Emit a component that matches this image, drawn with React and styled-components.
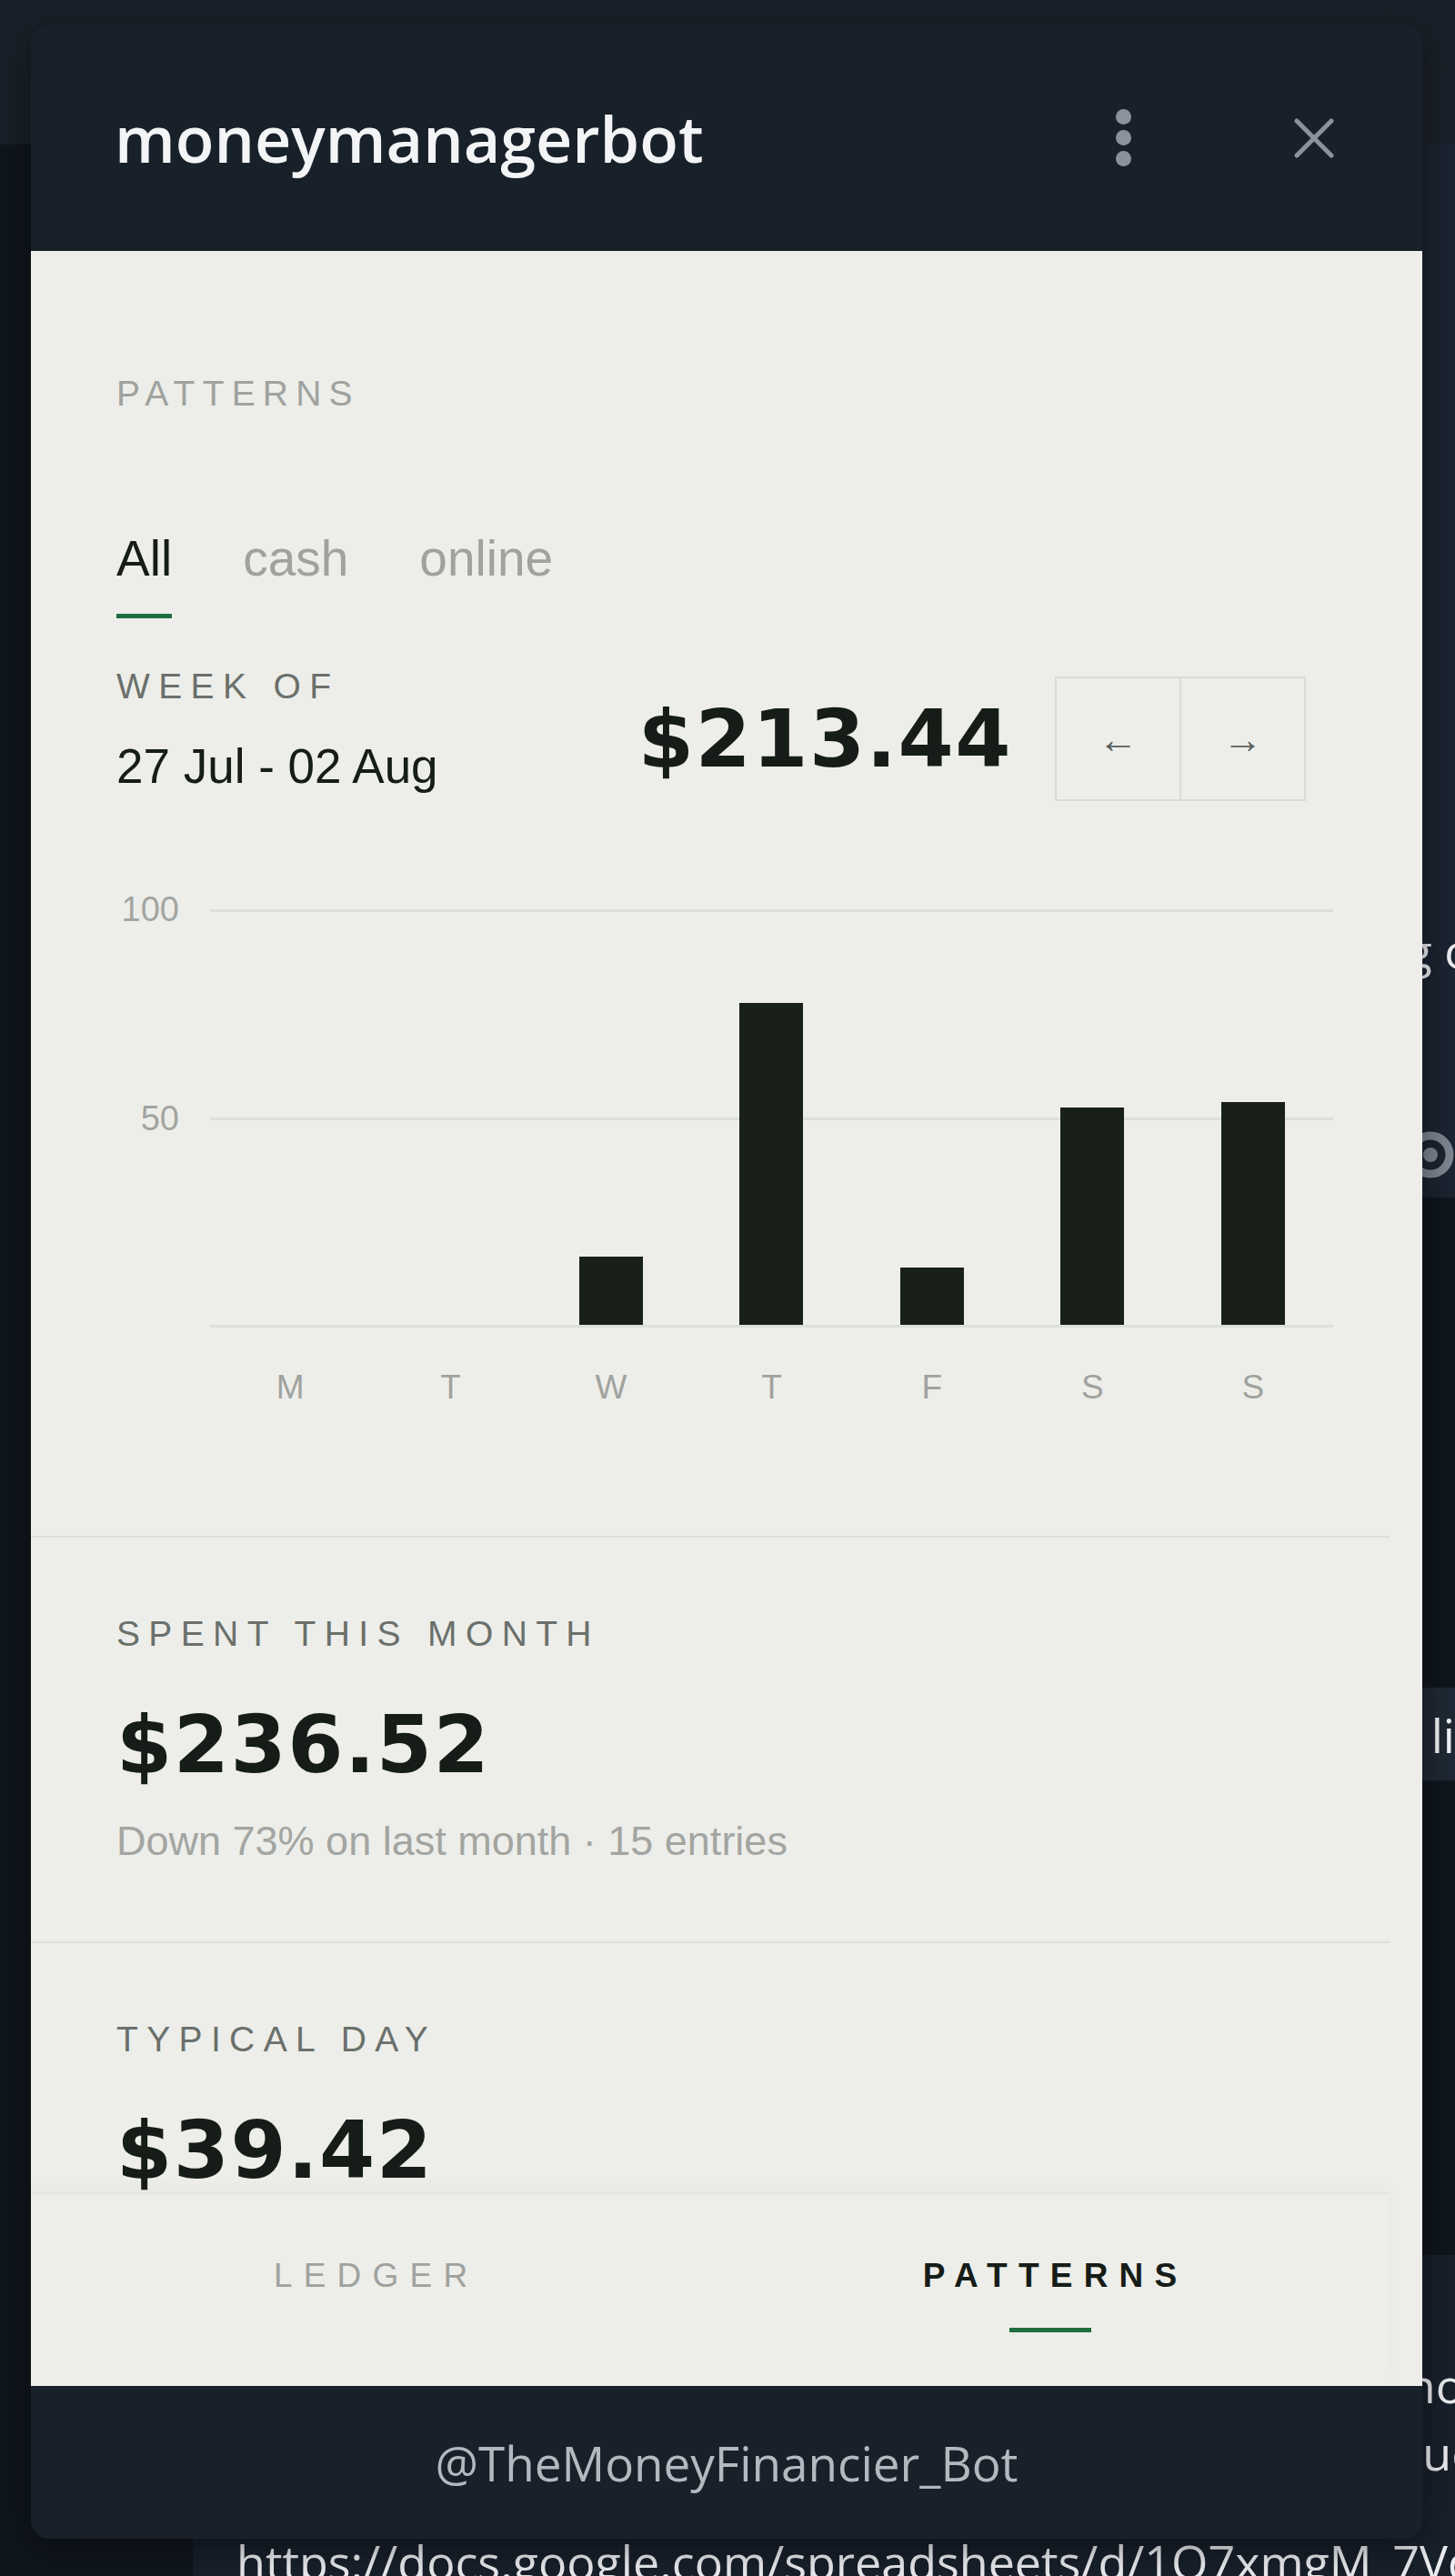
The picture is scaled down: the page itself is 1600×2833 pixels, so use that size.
import React from 'react';
import styled, { createGlobalStyle } from 'styled-components';

const GlobalStyle = createGlobalStyle`
  html, body {
    margin: 0;
    padding: 0;
  }
  body {
    background: #10161e;
    width: 1600px;
    height: 2833px;
    overflow: hidden;
  }
  * {
    box-sizing: border-box;
  }
`;

const week = [
  { day: 'M', value: 0 },
  { day: 'T', value: 0 },
  { day: 'W', value: 16.5 },
  { day: 'T', value: 77.4 },
  { day: 'F', value: 13.7 },
  { day: 'S', value: 52.3 },
  { day: 'S', value: 53.54 },
];

const App = () => (
  <Page>
    <GlobalStyle />
    {/* telegram chat behind the web app sheet */}
    <TopBar />
    <Bubble tone="#1b2431" h={1158}>
      <BubbleLine>Open the manager below to see your weekly spending overview here at once</BubbleLine>
      <EyeRow>
        <svg width="54" height="54" viewBox="0 0 54 54">
          <circle cx="27" cy="27" r="21" fill="none" stroke="#7d8691" strokeWidth="9" />
          <circle cx="27" cy="27" r="8" fill="#7d8691" />
        </svg>
      </EyeRow>
    </Bubble>
    <ChatButton>Open li</ChatButton>
    <Bubble tone="#18202b" offset={522} grow>
      <MessageText>Here is the sheet with all of your expenses from this month and previous ones</MessageText>
      <MessageText>Everything is saved automatically so you can check values any time you want</MessageText>
      <MessageText gap={46}>https://docs.google.com/spreadsheets/d/1Q7xmgM_7VdF3kq</MessageText>
    </Bubble>

    <Sheet>
      <SheetHeader>
        <Title>moneymanagerbot</Title>
        <Kebab>
          <Dot />
          <Dot />
          <Dot />
        </Kebab>
        <CloseIcon width="44" height="44" viewBox="0 0 44 44">
          <path d="M3 3 L41 41 M41 3 L3 41" stroke="#8a929d" strokeWidth="5" strokeLinecap="round" />
        </CloseIcon>
      </SheetHeader>

      <SheetBody>
        <Scroll>
          <Section top={135} bottom={141}>
            <Eyebrow light>PATTERNS</Eyebrow>
            <Tabs>
              <Tab active>All</Tab>
              <Tab>cash</Tab>
              <Tab>online</Tab>
            </Tabs>
            <WeekRow>
              <WeekInfo>
                <Eyebrow>WEEK OF</Eyebrow>
                <DateRange>27 Jul - 02 Aug</DateRange>
              </WeekInfo>
              <WeekTotal>
                <Amount>$213.44</Amount>
                <Pager>
                  <PagerButton>←</PagerButton>
                  <PagerButton>→</PagerButton>
                </Pager>
              </WeekTotal>
            </WeekRow>
            <Chart>
              <YAxis>
                <AxisLabel>100</AxisLabel>
                <AxisLabel>50</AxisLabel>
                <AxisLabel />
              </YAxis>
              <Plot>
                <GridLines>
                  <GridLine />
                  <GridLine />
                  <GridLine />
                </GridLines>
                <Bars>
                  {week.map((d, i) => (
                    <BarCell key={i}>
                      {d.value > 0 && <Bar style={{ height: `${d.value}%` }} />}
                    </BarCell>
                  ))}
                </Bars>
              </Plot>
              <Days>
                {week.map((d, i) => (
                  <DayLabel key={i}>{d.day}</DayLabel>
                ))}
              </Days>
            </Chart>
          </Section>

          <Section top={84} bottom={84}>
            <Eyebrow>SPENT THIS MONTH</Eyebrow>
            <Amount spaced>$236.52</Amount>
            <Note>Down 73% on last month · 15 entries</Note>
          </Section>

          <Section top={84} bottom={84}>
            <Eyebrow>TYPICAL DAY</Eyebrow>
            <Amount spaced>$39.42</Amount>
            <Note>Average over the days with spending</Note>
          </Section>
        </Scroll>

        <BottomNav>
          <NavItem>
            <NavText>LEDGER</NavText>
            <NavMark />
          </NavItem>
          <NavItem>
            <NavText active>PATTERNS</NavText>
            <NavMark active />
          </NavItem>
        </BottomNav>
      </SheetBody>

      <SheetFooter>@TheMoneyFinancier_Bot</SheetFooter>
    </Sheet>
  </Page>
);

export default App;

const Page = styled.div`
  position: relative;
  width: 1600px;
  height: 2833px;
  overflow: hidden;
  background: #10161e;
  display: flex;
  flex-direction: column;
  font-family: 'Open Sans', 'DejaVu Sans', sans-serif;
`;

const TopBar = styled.div`
  flex: none;
  height: 159px;
  background: #1a2029;
`;

const Bubble = styled.div`
  flex: ${({ grow }) => (grow ? '1' : 'none')};
  height: ${({ h }) => (h ? `${h}px` : 'auto')};
  margin-top: ${({ offset }) => offset || 0}px;
  margin-left: 212px;
  padding: ${({ grow }) => (grow ? '106px 0 0 48px' : '850px 0 0 48px')};
  background: ${({ tone }) => tone};
  overflow: hidden;
  display: flex;
  flex-direction: column;
`;

const BubbleLine = styled.div`
  white-space: nowrap;
  font-size: 52px;
  line-height: 72px;
  color: #eef0f3;
`;

const EyeRow = styled.div`
  margin-top: 162px;
  display: flex;
  justify-content: flex-end;
`;

const ChatButton = styled.div`
  flex: none;
  height: 102px;
  margin-top: 539px;
  margin-left: 212px;
  background: #1f2935;
  display: flex;
  align-items: center;
  justify-content: flex-end;
  overflow: hidden;
  font-size: 52px;
  color: #f2f4f7;
  white-space: nowrap;
`;

const MessageText = styled.div`
  margin-top: ${({ gap }) => gap || 0}px;
  white-space: nowrap;
  font-size: 52px;
  line-height: 74px;
  color: #eceef1;
`;

const Sheet = styled.div`
  position: absolute;
  top: 27px;
  left: 34px;
  width: 1530px;
  height: 2765px;
  border-radius: 20px;
  overflow: hidden;
  display: flex;
  flex-direction: column;
  box-shadow: 0 10px 40px rgba(0, 0, 0, 0.45);
`;

const SheetHeader = styled.header`
  flex: none;
  height: 249px;
  background: #18202a;
  display: flex;
  align-items: center;
  padding: 0 97px 0 92px;
`;

const Title = styled.h1`
  flex: 1;
  margin: 0;
  font-family: 'Open Sans', sans-serif;
  font-weight: 600;
  font-size: 70px;
  line-height: 1;
  color: #f3f4f6;
`;

const Kebab = styled.div`
  display: flex;
  flex-direction: column;
  gap: 6px;
  margin-right: 179px;
`;

const Dot = styled.span`
  width: 17px;
  height: 17px;
  border-radius: 50%;
  background: #8a929d;
`;

const CloseIcon = styled.svg`
  flex: none;
  display: block;
`;

const SheetBody = styled.div`
  flex: none;
  height: 2348px;
  background: #edeeea;
  padding-right: 36px;
  display: flex;
  flex-direction: column;
  font-family: 'Liberation Sans', Arial, sans-serif;
  color: #161c17;
`;

const Scroll = styled.div`
  flex: none;
  height: 2135px;
  overflow: hidden;
`;

const Section = styled.section`
  padding: ${({ top }) => top}px 92px ${({ bottom }) => bottom}px 94px;
  border-bottom: 2px solid #dcdfda;
`;

const Eyebrow = styled.div`
  font-size: 39px;
  line-height: 44px;
  letter-spacing: ${({ light }) => (light ? '0.21em' : '0.24em')};
  color: ${({ light }) => (light ? '#a0a29e' : '#6b706b')};
`;

const Tabs = styled.div`
  display: flex;
  gap: 78px;
  margin-top: 127px;
`;

const Tab = styled.div`
  font-size: 55px;
  line-height: 64px;
  padding-bottom: 29px;
  border-bottom: 5px solid ${({ active }) => (active ? '#1f6e40' : 'transparent')};
  color: ${({ active }) => (active ? '#161c17' : '#a0a29e')};
`;

const WeekRow = styled.div`
  display: flex;
  justify-content: space-between;
  align-items: flex-start;
  margin-top: 53px;
`;

const WeekInfo = styled.div`
  display: flex;
  flex-direction: column;
`;

const DateRange = styled.div`
  margin-top: 36px;
  font-size: 53px;
  line-height: 60px;
  color: #161c17;
`;

const WeekTotal = styled.div`
  display: flex;
  align-items: center;
  gap: 47px;
  margin-top: 11px;
`;

const Amount = styled.div`
  margin-top: ${({ spaced }) => (spaced ? '56px' : '0')};
  font-family: 'DejaVu Sans', sans-serif;
  font-weight: 700;
  font-size: 88px;
  line-height: 88px;
  letter-spacing: 1.5px;
  color: #161c17;
`;

const Pager = styled.div`
  display: flex;
`;

const PagerButton = styled.button`
  width: 139px;
  height: 137px;
  border: 2px solid #d9dbd6;
  background: transparent;
  padding: 0;
  display: flex;
  align-items: center;
  justify-content: center;
  font-family: 'Liberation Sans', 'DejaVu Sans', sans-serif;
  font-size: 44px;
  color: #5c605c;
  & + & {
    margin-left: -2px;
  }
`;

const Chart = styled.div`
  display: grid;
  grid-template-columns: 103px 1fr;
  margin: 119px -30px 0 0;
`;

const YAxis = styled.div`
  height: 504px;
  margin: -22px 0;
  padding-right: 34px;
  display: flex;
  flex-direction: column;
  justify-content: space-between;
  align-items: flex-end;
`;

const AxisLabel = styled.div`
  height: 44px;
  font-size: 38px;
  line-height: 44px;
  color: #a3a5a1;
`;

const Plot = styled.div`
  display: grid;
  height: 460px;
`;

const GridLines = styled.div`
  grid-area: 1 / 1;
  display: flex;
  flex-direction: column;
  justify-content: space-between;
`;

const GridLine = styled.div`
  height: 3px;
  background: #dcdfda;
`;

const Bars = styled.div`
  grid-area: 1 / 1;
  display: grid;
  grid-template-columns: repeat(7, 1fr);
  padding-bottom: 3px;
`;

const BarCell = styled.div`
  display: flex;
  justify-content: center;
  align-items: flex-end;
`;

const Bar = styled.div`
  width: 70px;
  background: #182019;
`;

const Days = styled.div`
  grid-column: 2;
  display: grid;
  grid-template-columns: repeat(7, 1fr);
  margin-top: 44px;
`;

const DayLabel = styled.div`
  text-align: center;
  font-size: 37px;
  line-height: 44px;
  color: #a0a29e;
`;

const Note = styled.div`
  margin-top: 36px;
  font-size: 45px;
  line-height: 52px;
  color: #a3a5a1;
`;

const BottomNav = styled.nav`
  flex: 1;
  display: grid;
  grid-template-columns: 1fr 1fr;
  border-top: 2px solid #e2e4df;
  box-shadow: 0 -8px 14px rgba(0, 0, 0, 0.025);
  background: #edeeea;
`;

const NavItem = styled.div`
  display: flex;
  flex-direction: column;
  align-items: center;
  padding-top: 68px;
`;

const NavText = styled.div`
  font-size: 37px;
  line-height: 44px;
  letter-spacing: 0.33em;
  padding-left: 0.33em;
  font-weight: ${({ active }) => (active ? 700 : 400)};
  color: ${({ active }) => (active ? '#161c17' : '#a0a29e')};
`;

const NavMark = styled.div`
  width: 90px;
  height: 5px;
  margin-top: 35px;
  background: ${({ active }) => (active ? '#1f6e40' : 'transparent')};
`;

const SheetFooter = styled.footer`
  flex: 1;
  background: #18202a;
  display: flex;
  align-items: center;
  justify-content: center;
  font-family: 'Open Sans', sans-serif;
  font-size: 53px;
  color: #b4b9c0;
`;
